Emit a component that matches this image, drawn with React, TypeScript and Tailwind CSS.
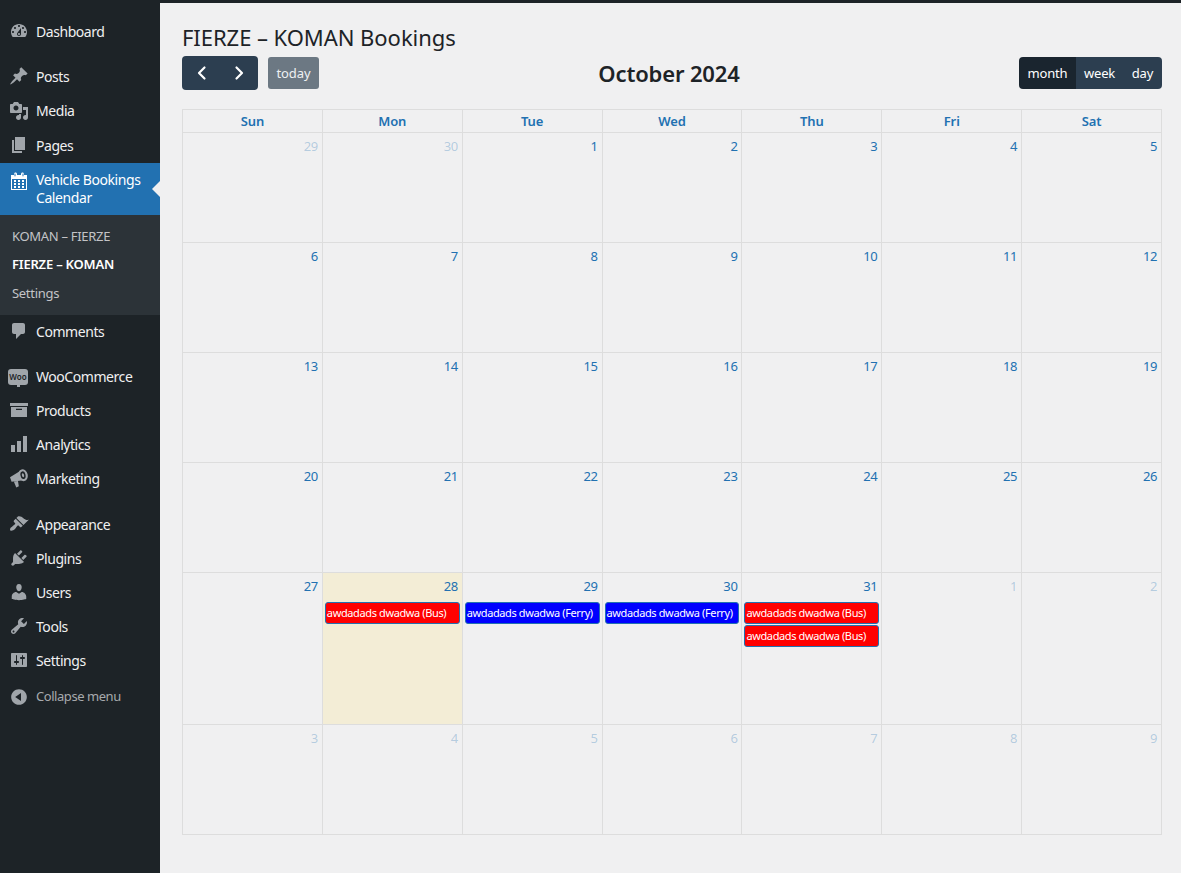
const P: Record<string, string> = {
  dashboard: "M3.76 16h12.48c1.1-1.37 1.76-3.11 1.76-5 0-4.42-3.58-8-8-8s-8 3.58-8 8c0 1.89.66 3.63 1.76 5zM10 4c.55 0 1 .45 1 1s-.45 1-1 1-1-.45-1-1 .45-1 1-1zM6 6c.55 0 1 .45 1 1s-.45 1-1 1-1-.45-1-1 .45-1 1-1zm8 0c.55 0 1 .45 1 1s-.45 1-1 1-1-.45-1-1 .45-1 1-1zm-5.37 5.55L12 7v6c0 1.1-.9 2-2 2s-2-.9-2-2c0-.57.24-1.08.63-1.45zM4 10c.55 0 1 .45 1 1s-.45 1-1 1-1-.45-1-1 .45-1 1-1zm12 0c.55 0 1 .45 1 1s-.45 1-1 1-1-.45-1-1 .45-1 1-1zm-5 3c0-.55-.45-1-1-1s-1 .45-1 1 .45 1 1 1 1-.45 1-1z",
  post: "M10.44 3.02l1.82-1.82 6.36 6.35-1.83 1.82c-1.05-.68-2.48-.57-3.41.36l-.75.75c-.92.93-1.04 2.35-.35 3.41l-1.83 1.82-2.41-2.41-2.8 2.79c-.42.42-3.38 2.71-3.8 2.29s1.86-3.39 2.28-3.81l2.79-2.79L4.1 9.36l1.83-1.82c1.05.69 2.48.57 3.4-.36l.75-.75c.93-.92 1.05-2.35.36-3.41z",
  media: "M13 11V4c0-.55-.45-1-1-1h-1.67L9 1H5L3.67 3H2c-.55 0-1 .45-1 1v7c0 .55.45 1 1 1h10c.55 0 1-.45 1-1zM7 4.5c1.38 0 2.5 1.12 2.5 2.5S8.38 9.5 7 9.5 4.5 8.38 4.5 7 5.62 4.5 7 4.5zM14 6h5v10.5c0 1.38-1.12 2.5-2.5 2.5S14 17.88 14 16.5s1.12-2.5 2.5-2.5c.17 0 .34.02.5.05V9h-3V6zm-4 8.05V13h2v3.5c0 1.38-1.12 2.5-2.5 2.5S7 17.88 7 16.5 8.12 14 9.5 14c.17 0 .34.02.5.05z",
  page: "M6 15V2h10v13H6zm-1 1h8v2H3V5h2v11z",
  calendar: "M15 4h3v15H2V4h3V3c0-.41.15-.76.44-1.06.29-.29.65-.44 1.06-.44s.77.15 1.06.44c.29.3.44.65.44 1.06v1h4V3c0-.41.15-.76.44-1.06.29-.29.65-.44 1.06-.44s.77.15 1.06.44c.29.3.44.65.44 1.06v1zM6 5.5c.28 0 .5-.22.5-.5V3c0-.28-.22-.5-.5-.5s-.5.22-.5.5v2c0 .28.22.5.5.5zm8 0c.28 0 .5-.22.5-.5V3c0-.28-.22-.5-.5-.5s-.5.22-.5.5v2c0 .28.22.5.5.5zM17 18V8H3v10h14zM7 9v2H5V9h2zm2 0h2v2H9V9zm4 2V9h2v2h-2zm-6 1v2H5v-2h2zm2 0h2v2H9v-2zm4 2v-2h2v2h-2zm-6 1v2H5v-2h2zm4 2H9v-2h2v2zm4 0h-2v-2h2v2z",
  comments: "M5 2h9c1.1 0 2 .9 2 2v7c0 1.1-.9 2-2 2h-2l-5 5v-5H5c-1.1 0-2-.9-2-2V4c0-1.1.9-2 2-2z",
  products: "M19 3v3H1V3h18zM2 7h16v10H2V7zm11 3V8.8H7V10h6z",
  analytics: "M18 18V2h-4v16h4zm-6 0V7H8v11h4zm-6 0v-7H2v7h4z",
  appearance: "M14.48 11.06L7.41 3.99l1.5-1.5c.5-.56 2.3-.47 3.51.32 1.21.8 1.43 1.28 2.91 2.1 1.18.64 2.45 1.26 4.45.85zm-.71.71L6.7 4.7 4.93 6.47c-.39.39-.39 1.02 0 1.41l1.06 1.06c.39.39.39 1.03 0 1.42-.6.6-1.43 1.11-2.21 1.69-.35.26-.7.53-1.01.84C1.43 13.23.5 15.6 1.36 16.47c.88.87 3.23-.05 4.59-1.41.31-.31.58-.66.84-1.01.58-.78 1.09-1.61 1.69-2.21.39-.39 1.02-.39 1.41 0l1.06 1.06c.39.39 1.02.39 1.41 0z",
  plugins: "M13.11 4.36L9.87 7.6 8 5.73l3.24-3.24c.35-.34 1.05-.2 1.56.32.52.51.66 1.21.31 1.55zm-8 1.77l.91-1.12 9.01 9.01-1.19.84c-.71.71-2.63 1.16-3.82 1.16H6.14L4.9 17.26c-.59.59-1.54.59-2.12 0-.59-.58-.59-1.53 0-2.12l1.24-1.24v-3.88c0-1.13.4-3.19 1.09-3.89zm7.26 3.97l3.24-3.24c.34-.35 1.04-.21 1.55.31.52.51.66 1.21.31 1.55l-3.24 3.25z",
  users: "M10 9.25c-2.27 0-2.73-3.44-2.73-3.44C7 4.02 7.82 2 9.97 2c2.16 0 2.98 2.02 2.71 3.81 0 0-.41 3.44-2.68 3.44zm0 2.57L12.72 10c2.39 0 4.52 2.33 4.52 4.53v2.49s-3.65 1.13-7.24 1.13c-3.65 0-7.24-1.13-7.24-1.13v-2.49c0-2.25 1.94-4.48 4.47-4.48z",
  tools: "M16.68 9.77c-1.34 1.34-3.3 1.67-4.95.99l-5.41 6.52c-.99.99-2.59.99-3.58 0s-.99-2.59 0-3.57l6.52-5.42c-.68-1.65-.35-3.61.99-4.95 1.28-1.28 3.12-1.62 4.72-1.06l-2.89 2.89 2.82 2.82 2.86-2.87c.53 1.58.18 3.39-1.08 4.65zM3.81 16.21c.4.39 1.04.39 1.43 0 .4-.4.4-1.04 0-1.43-.39-.4-1.03-.4-1.43 0-.39.39-.39 1.03 0 1.43z",
  settings: "M18 16V4c0-.55-.45-1-1-1H3c-.55 0-1 .45-1 1v12c0 .55.45 1 1 1h14c.55 0 1-.45 1-1zM8 11h1c.55 0 1 .45 1 1s-.45 1-1 1H8v1.5c0 .28-.22.5-.5.5s-.5-.22-.5-.5V13H6c-.55 0-1-.45-1-1s.45-1 1-1h1V5.5c0-.28.22-.5.5-.5s.5.22.5.5V11zm5-2h-1c-.55 0-1-.45-1-1s.45-1 1-1h1V5.5c0-.28.22-.5.5-.5s.5.22.5.5V7h1c.55 0 1 .45 1 1s-.45 1-1 1h-1v5.5c0 .28-.22.5-.5.5s-.5-.22-.5-.5V9z",
  collapse: "M10 2.16c4.33 0 7.84 3.51 7.84 7.84s-3.51 7.84-7.84 7.84S2.16 14.33 2.16 10 5.71 2.16 10 2.16zm2 11.72V6.12L6.18 9.97z",
};

function Icon({ d, active }: { d: string; active?: boolean }) {
  if (d === "marketing") {
    return (
      <svg viewBox="0 0 20 20" className="w-5 h-5 shrink-0 text-[#a0a5aa]" fill="currentColor">
        <path d="M1 9.300 11.500 2.800 14.500 12.300 2.600 13.700Z" />
        <path d="M4.800 13.400 9 13 9.800 18.200 7.300 19.400Z" />
        <ellipse cx="14" cy="7.200" rx="4.700" ry="6" transform="rotate(-14 14 7.200)" />
        <ellipse cx="14" cy="7.200" rx="2.500" ry="3.900" transform="rotate(-14 14 7.200)" fill="#1d2327" />
        <ellipse cx="14" cy="7.200" rx="1.100" ry="2" transform="rotate(-14 14 7.200)" />
      </svg>
    );
  }
  return (
    <svg viewBox="0 0 20 20" className={`w-5 h-5 shrink-0 ${active ? "text-white" : "text-[#a0a5aa]"}`} fill="currentColor" fillRule="evenodd">
      <path d={P[d]} />
    </svg>
  );
}

function Item({ icon, label, h = "h-[34px]", mt = "" }: { icon: string; label: string; h?: string; mt?: string }) {
  return (
    <div className={`${h} ${mt} flex items-center pl-[9px] pb-[2px] gap-[7px] text-[14px] tracking-[-0.44px] text-[#f0f0f1]`}>
      <Icon d={icon} />
      <span>{label}</span>
    </div>
  );
}

function Sidebar() {
  return (
    <aside className="w-[160px] shrink-0 bg-[#1d2327] pt-[12px] font-['Noto_Sans','Open_Sans',sans-serif]">
      <Item icon="dashboard" label="Dashboard" />
      <Item icon="post" label="Posts" mt="mt-[11px]" />
      <Item icon="media" label="Media" h="h-[35px]" />
      <Item icon="page" label="Pages" />
      <div className="relative h-[52px] bg-[#2271b1] flex pl-[9px] pt-[8px] gap-[7px] text-[14px] tracking-[-0.42px] leading-[18px] text-white">
        <Icon d="calendar" active />
        <span>Vehicle Bookings Calendar</span>
        <span className="absolute right-0 top-[18px] w-0 h-0 border-y-[8px] border-y-transparent border-r-[8px] border-r-[#f0f0f1]" />
      </div>
      <div className="h-[100px] bg-[#2c3338] pt-[7px] pl-[12px] text-[13px] tracking-[-0.3px] text-[#c3c4c7]">
        <div className="h-[28px] leading-[28px]">KOMAN – FIERZE</div>
        <div className="h-[29px] leading-[29px] font-semibold tracking-[-0.2px] text-white">FIERZE – KOMAN</div>
        <div className="h-[29px] leading-[29px]">Settings</div>
      </div>
      <Item icon="comments" label="Comments" />
      <div className="mt-[11px] h-[34px] flex items-center pl-[8px] gap-[8px] text-[14px] tracking-[-0.44px] text-[#f0f0f1]">
        <span className="relative w-[20px] h-[16px] shrink-0 rounded-[3px] bg-[#a0a5aa] text-[#1d2327] text-[8px] tracking-normal leading-[15px] font-semibold text-center">
          Woo
          <span className="absolute left-[9px] bottom-[-2px] w-[3px] h-[3px] bg-[#a0a5aa]" />
        </span>
        <span className="-mt-[2px]">WooCommerce</span>
      </div>
      <Item icon="products" label="Products" />
      <Item icon="analytics" label="Analytics" />
      <Item icon="marketing" label="Marketing" />
      <Item icon="appearance" label="Appearance" mt="mt-[12px]" />
      <Item icon="plugins" label="Plugins" />
      <Item icon="users" label="Users" />
      <Item icon="tools" label="Tools" />
      <Item icon="settings" label="Settings" />
      <div className="mt-[2px] h-[34px] flex items-center pl-[9px] gap-[7px] text-[13px] tracking-[-0.45px] text-[#a7aaad]">
        <Icon d="collapse" />
        <span>Collapse menu</span>
      </div>
    </aside>
  );
}

type Ev = { label: string; color: string };
const bus: Ev = { label: "awdadads dwadwa (Bus)", color: "bg-[#ff0000]" };
const ferry: Ev = { label: "awdadads dwadwa (Ferry)", color: "bg-[#0000ff]" };

type Day = { n: number; muted?: boolean; today?: boolean; events?: Ev[] };

const m = (n: number): Day => ({ n, muted: true });
const d = (n: number): Day => ({ n });
const rows: { h: string; days: Day[] }[] = [
  { h: "h-[110px]", days: [m(29), m(30), d(1), d(2), d(3), d(4), d(5)] },
  { h: "h-[110px]", days: [d(6), d(7), d(8), d(9), d(10), d(11), d(12)] },
  { h: "h-[110px]", days: [d(13), d(14), d(15), d(16), d(17), d(18), d(19)] },
  { h: "h-[110px]", days: [d(20), d(21), d(22), d(23), d(24), d(25), d(26)] },
  {
    h: "h-[152px]",
    days: [
      d(27),
      { n: 28, today: true, events: [bus] },
      { n: 29, events: [ferry] },
      { n: 30, events: [ferry] },
      { n: 31, events: [bus, bus] },
      m(1),
      m(2),
    ],
  },
  { h: "h-[110px]", days: [m(3), m(4), m(5), m(6), m(7), m(8), m(9)] },
];

function Calendar() {
  return (
    <div className="mt-[19px] w-[980px] border-t border-l border-[#dddddd]">
      <div className="grid grid-cols-7 h-[23px]">
        {["Sun", "Mon", "Tue", "Wed", "Thu", "Fri", "Sat"].map((x) => (
          <div key={x} className="border-r border-b border-[#dddddd] text-center text-[13px] tracking-[-0.1px] leading-[22px] font-semibold text-[#2271b1]">
            {x}
          </div>
        ))}
      </div>
      {rows.map((r, i) => (
        <div key={i} className={`grid grid-cols-7 ${r.h}`}>
          {r.days.map((x, j) => (
            <div key={j} className={`border-r border-b border-[#dddddd] ${x.today ? "bg-[#f3edd6]" : ""}`}>
              <div className={`h-[29px] pt-[3px] pr-[4px] text-right text-[13px] tracking-[-0.4px] leading-[20px] ${x.muted ? "text-[#2271b1]/30" : "text-[#2271b1]"}`}>
                {x.n}
              </div>
              {x.events?.map((e, k) => (
                <div key={k} className={`mx-[2px] mb-[1px] h-[22px] rounded-[3px] border border-[#2271b1] ${e.color} pl-[1px] text-[11px] tracking-[-0.38px] leading-[20px] text-white whitespace-nowrap overflow-hidden`}>
                  {e.label}
                </div>
              ))}
            </div>
          ))}
        </div>
      ))}
    </div>
  );
}

function Toolbar() {
  return (
    <div className="flex items-center justify-between mt-[4px] h-[34px]">
      <div className="flex items-center">
        <div className="w-[76px] h-[34px] bg-[#2c3e50] rounded-[4px] flex items-center justify-around px-[1px] text-white">
          <svg viewBox="0 0 16 16" className="w-4 h-4" fill="none" stroke="currentColor" strokeWidth="2.2" strokeLinecap="round" strokeLinejoin="round"><path d="M10.5 2.5 5 8l5.5 5.5" /></svg>
          <svg viewBox="0 0 16 16" className="w-4 h-4" fill="none" stroke="currentColor" strokeWidth="2.2" strokeLinecap="round" strokeLinejoin="round"><path d="M5.5 2.5 11 8l-5.5 5.5" /></svg>
        </div>
        <div className="ml-[10px] w-[51px] h-[32px] bg-[#6c7883] rounded-[3px] text-center text-[13px] tracking-[-0.1px] leading-[32px] text-[#eef0f2]">today</div>
      </div>
      <div className="text-[22px] leading-[30px] font-semibold tracking-[-0.15px] text-[#1d2327]">October 2024</div>
      <div className="flex h-[32px] w-[143px] rounded-[4px] overflow-hidden text-[13px] tracking-[-0.2px] leading-[32px] text-white text-center">
        <div className="w-[57px] bg-[#1a252f]">month</div>
        <div className="w-[47px] bg-[#2c3e50]">week</div>
        <div className="w-[39px] bg-[#2c3e50]">day</div>
      </div>
    </div>
  );
}

export default function App() {
  return (
    <div className="w-[1181px] h-[873px] overflow-hidden flex flex-col bg-[#f0f0f1] font-['Noto_Sans','Open_Sans',sans-serif]">
      <div className="h-[3px] bg-[#1d2327] shrink-0" />
      <div className="flex flex-1 min-h-0">
        <Sidebar />
        <main className="pl-[22px] pt-[19px] w-[1002px]">
          <h1 className="text-[22px] tracking-[-0.05px] leading-[30px] font-normal text-[#1d2327]">FIERZE – KOMAN Bookings</h1>
          <Toolbar />
          <Calendar />
        </main>
      </div>
    </div>
  );
}
